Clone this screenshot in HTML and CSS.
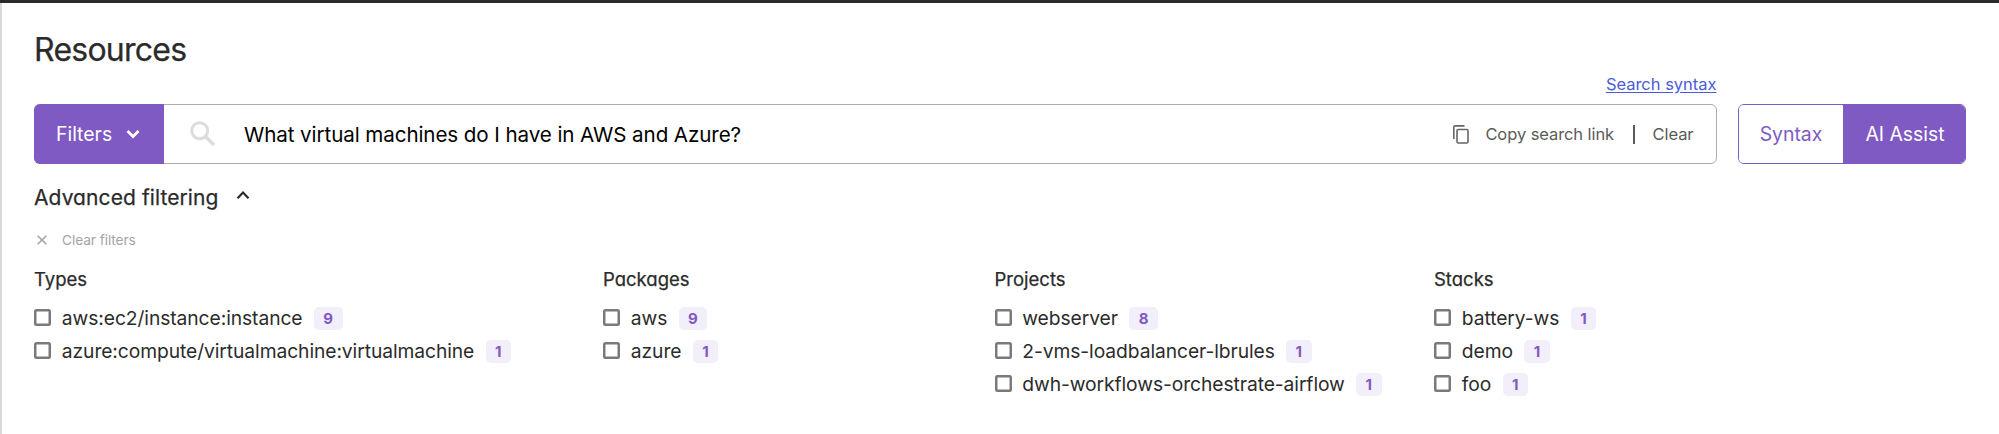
FILE: index.html
```html
<!DOCTYPE html>
<html lang="en">
<head>
<meta charset="utf-8">
<title>Resources</title>
<link rel="stylesheet" href="styles.css">
</head>
<body>
<main class="page">
  <h1 class="title">Resources</h1>
  <div class="search-row">
    <div class="search">
      <a class="syntax-link" href="#">Search syntax</a>
      <div class="search-box">
        <button class="filters">Filters
          <svg width="14" height="10" viewBox="0 0 14 10"><path d="M1.5 2l5.5 5.5L12.5 2" fill="none" stroke="#fff" stroke-width="2.7"/></svg>
        </button>
        <svg class="magnifier" width="26" height="26" viewBox="0 0 26 26"><circle cx="9.7" cy="9.7" r="8" fill="none" stroke="#dcdcdc" stroke-width="3"/><path d="M15.5 15.5l8.5 8.5" stroke="#dcdcdc" stroke-width="3.6"/></svg>
        <span class="query">What virtual machines do I have in AWS and Azure?</span>
        <svg class="copy" width="16" height="19" viewBox="0 0 16 19"><path d="M.8 14V2.3Q.8.9 2.2.9H11.5" fill="none" stroke="#666" stroke-width="1.6"/><rect x="4" y="4.5" width="11" height="13.5" rx="1.2" fill="none" stroke="#666" stroke-width="1.6"/></svg>
        <span class="action copy-label">Copy search link</span>
        <span class="divider"></span>
        <span class="action clear-label">Clear</span>
      </div>
    </div>
    <div class="toggle"><button class="mode">Syntax</button><button class="mode active">AI Assist</button></div>
  </div>
  <div class="advanced"><span>Advanced filtering</span>
    <svg width="14" height="10" viewBox="0 0 14 10"><path d="M1.5 8.3L7 2.5l5.5 5.8" fill="none" stroke="#2b2b2b" stroke-width="2.2"/></svg>
  </div>
  <div class="clear-filters">
    <svg width="10" height="10" viewBox="0 0 10 10"><path d="M.7.7l8.6 8.6M9.3.7L.7 9.3" stroke="#a5a5a5" stroke-width="1.6"/></svg>
    <span>Clear filters</span>
  </div>
  <div class="facets">
    <section class="facet">
      <h2 class="facet-title">Types</h2>
      <label class="option"><i class="check"></i><span class="name">aws:ec2/instance:instance</span><b class="badge">9</b></label>
      <label class="option"><i class="check"></i><span class="name">azure:compute/virtualmachine:virtualmachine</span><b class="badge">1</b></label>
    </section>
    <section class="facet">
      <h2 class="facet-title">Packages</h2>
      <label class="option"><i class="check"></i><span class="name">aws</span><b class="badge">9</b></label>
      <label class="option"><i class="check"></i><span class="name">azure</span><b class="badge">1</b></label>
    </section>
    <section class="facet">
      <h2 class="facet-title">Projects</h2>
      <label class="option"><i class="check"></i><span class="name">webserver</span><b class="badge">8</b></label>
      <label class="option"><i class="check"></i><span class="name">2-vms-loadbalancer-lbrules</span><b class="badge">1</b></label>
      <label class="option"><i class="check"></i><span class="name">dwh-workflows-orchestrate-airflow</span><b class="badge">1</b></label>
    </section>
    <section class="facet">
      <h2 class="facet-title">Stacks</h2>
      <label class="option"><i class="check"></i><span class="name">battery-ws</span><b class="badge">1</b></label>
      <label class="option"><i class="check"></i><span class="name">demo</span><b class="badge">1</b></label>
      <label class="option"><i class="check"></i><span class="name">foo</span><b class="badge">1</b></label>
    </section>
  </div>
</main>
</body>
</html>
```
FILE: styles.css
```css
* { box-sizing: border-box; }
body { margin: 0; background: #fff; color: #2b2b2b; font-family: Inter, "Liberation Sans", sans-serif; }
svg { display: block; flex: none; }
button { font: inherit; border: 0; padding: 0; margin: 0; }
.page { height: 434px; border-top: 3px solid #2b2a2c; box-shadow: inset 2px 0 #d9d9d9; padding: 28px 33px 0 34px; overflow: hidden; white-space: nowrap; }
.title, .advanced, .facet-title { font-feature-settings: "cv11"; font-weight: 400; -webkit-text-stroke: 0.25px #2b2b2b; }
.title { margin: 0; height: 41px; line-height: 38px; font-size: 32px; letter-spacing: -0.75px; }
.search-row { display: flex; align-items: flex-end; justify-content: space-between; height: 92px; }
.search { width: 1682.5px; display: flex; flex-direction: column; align-items: flex-end; }
.syntax-link { color: #4d5bd9; font-size: 16.5px; line-height: 20px; letter-spacing: -0.02px; margin-bottom: 10px; text-underline-offset: 2px; }
.search-box { width: 100%; height: 60px; display: flex; align-items: center; border: 1px solid #adadad; border-radius: 6px; }
.filters { width: 130px; height: 60px; margin-left: -1px; padding: 0 24px 0 22px; display: flex; align-items: center; justify-content: space-between; background: #805ac3; color: #fff; font-size: 19.4px; border-radius: 6px 0 0 6px; }
.magnifier { margin-left: 26px; }
.query { margin-left: 28px; color: #000; font-size: 20.6px; letter-spacing: -0.09px; flex: 1; }
.action { color: #5a5a5a; font-size: 16.5px; letter-spacing: -0.08px; }
.copy-label { margin-left: 16px; }
.divider { width: 1.5px; height: 19px; background: #5a5a5a; margin: 0 18px 0 19px; }
.clear-label { margin-right: 22px; }
.toggle { width: 228px; height: 60px; display: flex; border: 1px solid #805ac3; border-radius: 6px; overflow: hidden; }
.mode { width: 104px; background: #fff; color: #805ac3; font-size: 19.4px; }
.mode.active { flex: 1; padding-left: 2px; background: #805ac3; color: #fff; }
.advanced { display: flex; align-items: center; gap: 17px; height: 66px; font-size: 21px; letter-spacing: 0.09px; }
.advanced svg { margin-top: -4px; }
.clear-filters { display: flex; align-items: center; gap: 15px; height: 20px; padding-left: 3px; color: #a5a5a5; font-size: 13.75px; letter-spacing: -0.1px; }
.facets { display: grid; grid-template-columns: 569px 391.5px 439.5px 1fr; margin-top: 13px; }
.facet-title { margin: 0 0 6px; height: 32px; line-height: 33px; font-size: 18.5px; }
.option { display: flex; align-items: center; height: 33px; }
.check { width: 17px; height: 17px; box-shadow: inset 0 0 0 2.5px #7a7a7a; border-radius: 2.5px; }
.name { margin-left: 10.8px; font-size: 19.25px; letter-spacing: -0.08px; }
.badge { margin: 2px 0 0 11.3px; height: 23px; line-height: 23px; padding: 0 9.5px; border-radius: 5px; background: #f2eefa; color: #805ac3; font-size: 15px; font-weight: 700; }
```
